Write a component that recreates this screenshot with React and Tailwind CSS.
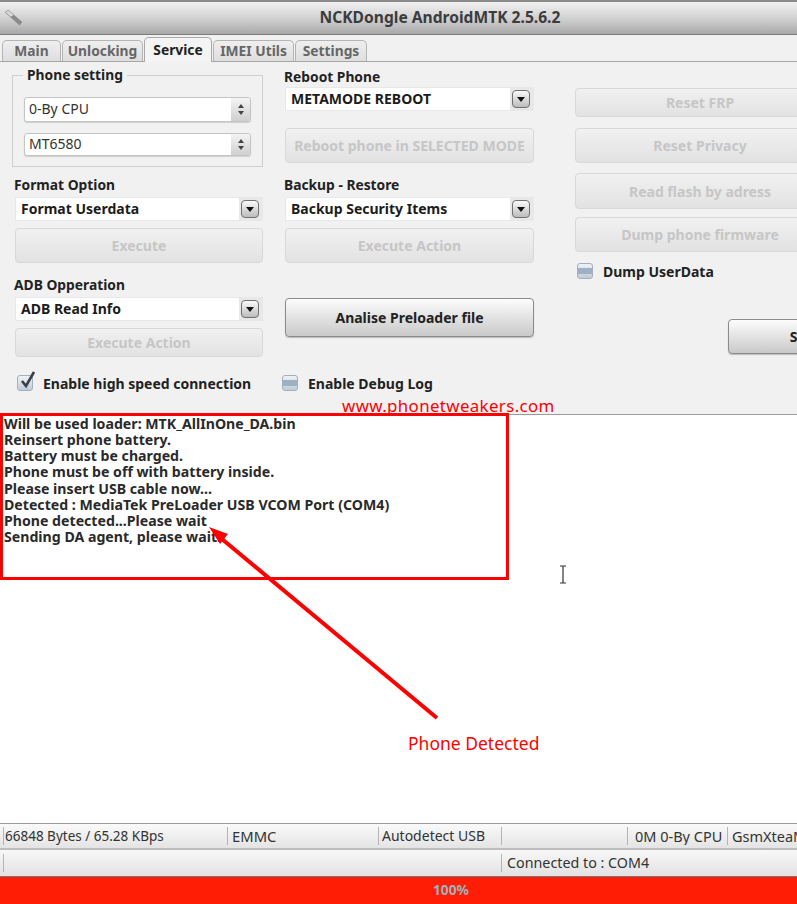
import React from "react";

const font = { fontFamily: '"Noto Sans", "DejaVu Sans", sans-serif' };

const Combo = ({ text, className = "" }) => (
  <div className={`h-[24px] bg-[#e8e8e8] flex p-[1px] pr-[2px] ${className}`}>
    <div className="flex-1 bg-white flex items-center pl-[5px] pb-[2px] text-[14px] font-bold text-[#1c1c1c]">{text}</div>
    <div className="w-[22px] bg-[#e8e8e8] flex items-center justify-center">
      <div className="w-[18px] h-[18px] rounded-[4px] border border-[#6f7072] bg-gradient-to-b from-[#fafafa] to-[#bdbdbd] flex items-center justify-center">
        <div className="w-0 h-0 border-x-[4px] border-x-transparent border-t-[5px] border-t-[#111]" />
      </div>
    </div>
  </div>
);

const Spin = ({ text, className = "" }) => (
  <div className={`mx-[11px] rounded-[3px] border border-[#c4c4c4] bg-white flex overflow-hidden shadow-[0_1px_1px_#d0d0d0] ${className}`}>
    <div className="flex-1 flex items-center pl-[4px] pb-[2px] text-[14px] text-[#333]">{text}</div>
    <div className="w-[19px] bg-gradient-to-b from-[#f4f4f4] to-[#cfcfcf] flex flex-col items-center justify-center gap-[3px]">
      <div className="w-0 h-0 border-x-[3.5px] border-x-transparent border-b-[4px] border-b-[#444]" />
      <div className="w-0 h-0 border-x-[3.5px] border-x-transparent border-t-[4px] border-t-[#444]" />
    </div>
  </div>
);

const Disabled = ({ text, className = "" }) => (
  <div className={`rounded-[4px] border border-[#d8d8d8] bg-gradient-to-b from-[#f1f1f1] to-[#e2e2e2] flex items-center justify-center text-[14px] font-bold text-[#c6c6c6] whitespace-nowrap ${className}`}>
    {text}
  </div>
);

const Strong = ({ text, className = "" }) => (
  <div className={`rounded-[4px] border border-[#8b8b8b] bg-gradient-to-b from-[#fdfdfd] to-[#c9c9c9] flex items-center justify-center text-[14px] font-bold text-[#222] whitespace-nowrap shadow-[0_1px_1px_#bbb] ${className}`}>
    {text}
  </div>
);

const Label = ({ text, className = "" }) => (
  <div className={`text-[13.8px] font-bold text-[#222] leading-[18px] whitespace-nowrap ${className}`}>{text}</div>
);

const Check = ({ text, checked, className = "" }) => (
  <div className={`flex items-center gap-[10px] h-[18px] ${className}`}>
    <div className="relative w-[16px] h-[16px] rounded-[3px] border border-[#9fb0c0] bg-gradient-to-b from-[#eef2f5] to-[#c2ccd6] flex items-center">
      {!checked && <div className="w-full h-[6px] bg-[#9fb0c2]" />}
      {checked && (
        <svg viewBox="0 0 18 20" className="absolute left-[0px] top-[-6px] w-[18px] h-[20px]">
          <path d="M4 11 L8 16 L16 2" fill="none" stroke="#3a3f48" strokeWidth="2.6" />
        </svg>
      )}
    </div>
    <span className="text-[14px] font-bold text-[#222] whitespace-nowrap">{text}</span>
  </div>
);

const Tab = ({ text, active, className = "" }) => (
  <div
    className={`flex items-center justify-center rounded-t-[5px] border border-b-0 text-[13.8px] font-bold ${
      active
        ? "h-[25px] border-[#a8a8a8] bg-[#f4f4f4] text-[#222] -mb-[1px] z-10"
        : "h-[21px] border-[#b4b4b4] bg-gradient-to-b from-[#efefef] to-[#dedede] text-[#666]"
    } ${className}`}
  >
    {text}
  </div>
);

const Cell = ({ text, className = "" }) => (
  <div className={`h-[18px] shrink-0 border-l border-[#b4b4b4] leading-[18px] text-[#333] whitespace-nowrap overflow-hidden ${className}`}>{text}</div>
);

const logLines = [
  "Will be used loader: MTK_AllInOne_DA.bin",
  "Reinsert phone battery.",
  "Battery must be charged.",
  "Phone must be off with battery inside.",
  "Please insert USB cable now...",
  "Detected : MediaTek PreLoader USB VCOM Port (COM4)",
  "Phone detected...Please wait",
  "Sending DA agent, please wait..",
];

export default function App() {
  return (
    <div className="relative w-[797px] h-[904px] overflow-hidden bg-white flex flex-col" style={font}>
      {/* title bar */}
      <div className="h-[35px] shrink-0 border-t-[2px] border-b-[1px] border-t-[#8a8a8a] border-b-[#7b7b7b] bg-gradient-to-b from-[#f1f1f1] via-[#d2d2d2] to-[#a9a9a9] flex items-center justify-center relative">
        <svg viewBox="0 0 24 24" className="absolute left-[3px] top-[5px] w-[21px] h-[21px]">
          <path d="M2 6 L6 3 L22 17 L19 21 Z" fill="#8b8b8b" />
          <path d="M3 6 L6 4 L12 9 L9 11 Z" fill="#d8d8d8" />
        </svg>
        <span className="text-[15.6px] font-bold text-[#3c3c3c] ml-[83px]">NCKDongle AndroidMTK 2.5.6.2</span>
      </div>

      {/* tabs */}
      <div className="h-[27px] shrink-0 bg-[#f1f1f1] border-b border-[#a6a6a6] flex items-end pl-[2px] gap-[1px]">
        <Tab text="Main" className="w-[59px]" />
        <Tab text="Unlocking" className="w-[81px]" />
        <Tab text="Service" active className="w-[68px]" />
        <Tab text="IMEI Utils" className="w-[81px]" />
        <Tab text="Settings" className="w-[72px]" />
      </div>

      {/* service panel */}
      <div className="h-[353px] shrink-0 bg-[#f1f1f1] border-b border-[#9c9c9c] flex overflow-hidden">
        <div className="w-[250px] shrink-0 ml-[13px]">
          <div className="relative mt-[13px] h-[92px] border border-[#cfcfcf] pt-[21px] -ml-[1px]">
            <div className="absolute left-[10px] top-[-10px] bg-[#f1f1f1] px-[4px] text-[13.8px] font-bold text-[#222] leading-[18px]">Phone setting</div>
            <Spin text="0-By CPU" className="h-[25px]" />
            <Spin text="MT6580" className="h-[23px] mt-[11px]" />
          </div>
          <Label text="Format Option" className="mt-[9px] ml-[1px]" />
          <Combo text="Format Userdata" className="mt-[3px] ml-[2px]" />
          <Disabled text="Execute" className="h-[35px] mt-[7px] ml-[2px]" />
          <Label text="ADB Opperation" className="mt-[13px] ml-[1px]" />
          <Combo text="ADB Read Info" className="mt-[3px] ml-[2px]" />
          <Disabled text="Execute Action" className="h-[29px] mt-[7px] ml-[2px]" />
          <Check text="Enable high speed connection" checked className="mt-[17px] ml-[4px]" />
        </div>

        <div className="w-[249px] shrink-0 ml-[22px]">
          <Label text="Reboot Phone" className="mt-[6px] -ml-[1px]" />
          <Combo text="METAMODE REBOOT" className="mt-[1px]" />
          <Disabled text="Reboot phone in SELECTED MODE" className="h-[35px] mt-[17px]" />
          <Label text="Backup - Restore" className="mt-[13px] -ml-[1px]" />
          <Combo text="Backup Security Items" className="mt-[3px]" />
          <Disabled text="Execute Action" className="h-[35px] mt-[7px]" />
          <Strong text="Analise Preloader file" className="h-[39px] mt-[35px]" />
          <Check text="Enable Debug Log" className="mt-[37px] -ml-[3px]" />
        </div>

        <div className="w-[250px] shrink-0 ml-[41px]">
          <Disabled text="Reset FRP" className="h-[29px] mt-[26px]" />
          <Disabled text="Reset Privacy" className="h-[35px] mt-[11px]" />
          <Disabled text="Read flash by adress" className="h-[36px] mt-[10px]" />
          <Disabled text="Dump phone firmware" className="h-[35px] mt-[8px]" />
          <Check text="Dump UserData" className="mt-[10px] ml-[2px]" />
          <Strong text="Save" className="h-[35px] mt-[39px] ml-[153px] w-[156px]" />
        </div>
      </div>

      {/* log */}
      <div className="flex-1 bg-white pt-[1px] pl-[4px] text-[14.15px] font-bold text-[#2a2a2a] leading-[16.15px]">
        {logLines.map((line) => (
          <div key={line} className="whitespace-nowrap">{line}</div>
        ))}
      </div>

      {/* status rows */}
      <div className="h-[27px] shrink-0 border-t border-[#9a9a9a] border-b-[2px] border-b-[#bdbdbd] bg-gradient-to-b from-[#fafafa] to-[#e4e4e4] flex items-center pl-[3px]">
        <Cell text="66848 Bytes / 65.28 KBps" className="w-[224px] pl-[1px] text-[13.5px]" />
        <Cell text="EMMC" className="w-[151px] pl-[4px] text-[14.8px]" />
        <Cell text="Autodetect USB" className="w-[123px] pl-[3px] text-[14px]" />
        <Cell text="" className="w-[126px]" />
        <Cell text="0M 0-By CPU" className="w-[100px] pl-[7px] text-[14.5px]" />
        <Cell text="GsmXteaM" className="w-[70px] pl-[4px] text-[14.5px]" />
      </div>
      <div className="h-[27px] shrink-0 bg-gradient-to-b from-[#f8f8f8] to-[#e2e2e2] border-b border-[#777] flex items-center pl-[3px]">
        <Cell text="" className="w-[498px]" />
        <Cell text="Connected to : COM4" className="w-[200px] pl-[5px] text-[14.3px]" />
      </div>
      <div className="h-[27px] shrink-0 bg-[#ff1e05] flex items-center justify-center">
        <span className="text-[13.8px] font-bold text-[#9db2ba] ml-[105px]">100%</span>
      </div>

      {/* annotations over the screenshot */}
      <div className="absolute left-0 top-[413px] w-[509px] h-[167px] border-[3px] border-[#ff0000]" />
      <div className="absolute left-[342px] top-[394px] text-[16.9px] leading-[24px] text-[#ff0000] whitespace-nowrap tracking-[0.35px]">www.phonetweakers.com</div>
      <div className="absolute left-[408px] top-[731px] text-[17.5px] leading-[24px] text-[#ff0000] whitespace-nowrap">Phone Detected</div>
      <svg viewBox="0 0 797 904" className="absolute inset-0 w-[797px] h-[904px] pointer-events-none">
        <path d="M437 718 L222 539" stroke="#ff0000" strokeWidth="4" fill="none" />
        <path d="M209 527 L228 534 L220 544 Z" fill="#ff0000" />
        <path d="M560 566 H563 M566 566 H563 V583 M560 583 H566" stroke="#333" strokeWidth="1.2" fill="none" />
      </svg>
    </div>
  );
}
